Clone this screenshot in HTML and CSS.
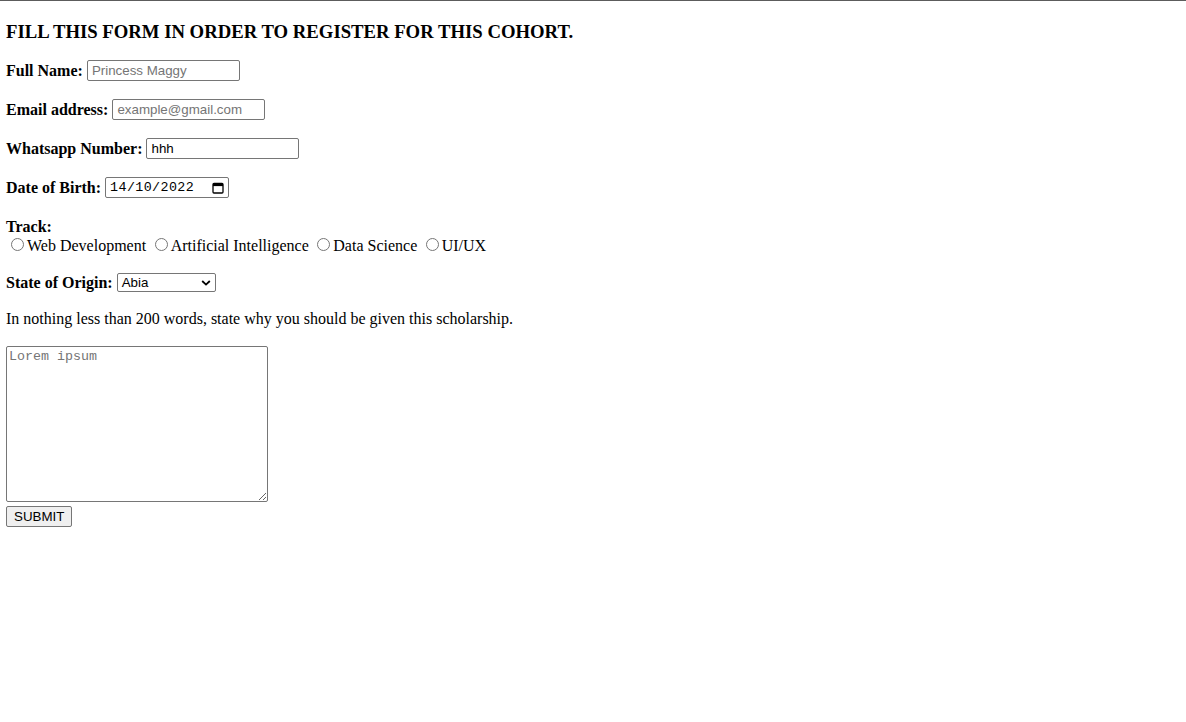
FILE: index.html
```html
<!DOCTYPE html>
<html lang="en">
<head>
<meta charset="utf-8">
<title>Cohort Registration</title>
<link rel="stylesheet" href="styles.css">
</head>
<body>
<main class="page">
  <h3 class="title">FILL THIS FORM IN ORDER TO REGISTER FOR THIS COHORT.</h3>
  <form class="form">
    <div class="row">
      <label class="label" for="name">Full Name:</label>
      <input class="field" id="name" type="text" placeholder="Princess Maggy">
    </div>
    <div class="row">
      <label class="label" for="email">Email address:</label>
      <input class="field" id="email" type="email" placeholder="example@gmail.com">
    </div>
    <div class="row">
      <label class="label" for="phone">Whatsapp Number:</label>
      <input class="field" id="phone" type="text" value="hhh">
    </div>
    <div class="row">
      <span class="label">Date of Birth:</span>
      <span class="date">
        <span class="date-text">14/10/2022</span>
        <svg class="cal" width="12" height="12" viewBox="0 0 12 12"><rect x="1" y="1.5" width="10" height="9.5" rx="1" fill="none" stroke="#000" stroke-width="1.3"/><rect x="1" y="1.5" width="10" height="2.6" fill="#000"/></svg>
      </span>
    </div>
    <div class="track">
      <div class="label track-label">Track:</div>
      <div class="options">
        <label class="opt"><input class="radio" type="radio" name="track">Web Development</label>
        <label class="opt"><input class="radio" type="radio" name="track">Artificial Intelligence</label>
        <label class="opt"><input class="radio" type="radio" name="track">Data Science</label>
        <label class="opt"><input class="radio" type="radio" name="track">UI/UX</label>
      </div>
    </div>
    <div class="row row-state">
      <span class="label">State of Origin:</span>
      <span class="select">
        <span class="select-text">Abia</span>
        <svg class="chev" width="10" height="8" viewBox="0 0 10 8"><path d="M1.2 2 L5 5.6 L8.8 2" fill="none" stroke="#000" stroke-width="1.8"/></svg>
      </span>
    </div>
    <p class="prompt">In nothing less than 200 words, state why you should be given this scholarship.</p>
    <textarea class="essay" placeholder="Lorem ipsum"></textarea>
    <button class="submit" type="button">SUBMIT</button>
  </form>
</main>
</body>
</html>
```

FILE: styles.css
```css
html, body {
  margin: 0;
  padding: 0;
  background: #fff;
}
body {
  border-top: 1px solid #5c5c5c;
  font-family: "Liberation Serif", "Times New Roman", serif;
  font-size: 16px;
  color: #000;
}
.page {
  padding: 20px 6px 0 6px;
}
.title {
  margin: 0;
  font-size: 18.72px;
  line-height: 22px;
  font-weight: bold;
}
.form {
  display: flex;
  flex-direction: column;
  align-items: flex-start;
  margin-top: 16px;
}
.row {
  display: flex;
  align-items: center;
  gap: 4px;
  height: 23px;
  margin-bottom: 16px;
}
.row-state {
  margin-bottom: 15px;
}
.label {
  font-weight: bold;
  line-height: 19px;
}
.field {
  box-sizing: border-box;
  width: 153px;
  height: 21px;
  margin: 0;
  padding: 1px 4px;
  border: 1px solid #767676;
  border-radius: 2px;
  font-family: "Liberation Sans", Arial, sans-serif;
  font-size: 13.33px;
  color: #000;
  background: #fff;
  outline: none;
}
.field::placeholder {
  color: #757575;
}
.date {
  box-sizing: border-box;
  display: inline-flex;
  align-items: center;
  justify-content: space-between;
  width: 124px;
  height: 21px;
  padding: 0 4px 0 4px;
  border: 1px solid #767676;
  border-radius: 2px;
}
.date-text {
  font-family: "Liberation Mono", "Courier New", monospace;
  font-size: 13.33px;
  letter-spacing: 0.4px;
}
.cal {
  display: block;
}
.track {
  margin-bottom: 16px;
}
.track-label {
  padding-top: 2px;
  line-height: 19px;
}
.options {
  display: flex;
  align-items: center;
  gap: 8.5px;
  height: 20px;
  margin-top: -1px;
  padding-left: 5px;
}
.opt {
  display: inline-flex;
  align-items: center;
  gap: 3px;
  line-height: 19px;
}
.radio {
  appearance: none;
  -webkit-appearance: none;
  box-sizing: border-box;
  width: 13px;
  height: 13px;
  margin: 0;
  border: 1px solid #767676;
  border-radius: 50%;
  background: #fff;
  position: relative;
  top: -1px;
}
.select {
  box-sizing: border-box;
  display: inline-flex;
  align-items: center;
  justify-content: space-between;
  width: 99px;
  height: 19px;
  padding: 0 4px 0 4px;
  border: 1px solid #767676;
  border-radius: 2px;
  background: #fff;
}
.select-text {
  font-family: "Liberation Sans", Arial, sans-serif;
  font-size: 13.33px;
}
.chev {
  display: block;
}
.prompt {
  margin: 0 0 18px 0;
  line-height: 19px;
}
.essay {
  box-sizing: border-box;
  width: 262px;
  height: 156px;
  margin: 0;
  padding: 2px;
  border: 1px solid #767676;
  border-radius: 2px;
  font-family: "Liberation Mono", "Courier New", monospace;
  font-size: 13.33px;
  outline: none;
}
.essay::placeholder {
  color: #757575;
}
.submit {
  box-sizing: border-box;
  margin-top: 4px;
  height: 21px;
  padding: 1px 7px;
  border: 1px solid #767676;
  border-radius: 2px;
  background: #efefef;
  font-family: "Liberation Sans", Arial, sans-serif;
  font-size: 13.33px;
  color: #000;
}
```
